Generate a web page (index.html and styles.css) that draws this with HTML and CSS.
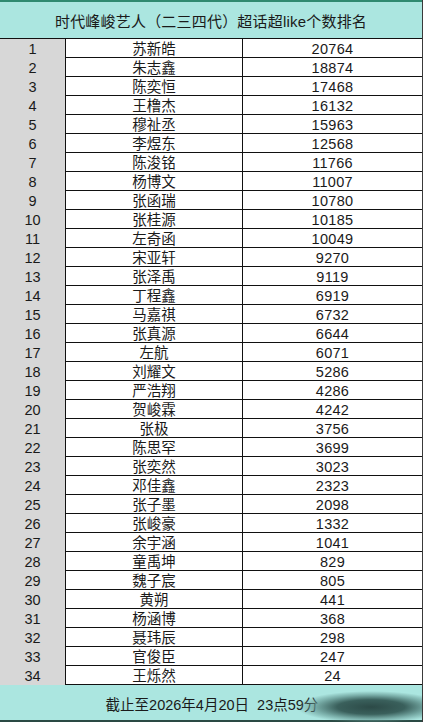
FILE: index.html
```html
<!DOCTYPE html>
<html lang="zh">
<head>
<meta charset="utf-8">
<link rel="stylesheet" href="styles.css">
</head>
<body>
<div class="sheet">
  <div class="title">时代峰峻艺人（二三四代）超话超like个数排名</div>
  <div class="grid" id="grid">
    <div class="row"><div class="c1">1</div><div class="c2">苏新皓</div><div class="c3">20764</div></div>
    <div class="row"><div class="c1">2</div><div class="c2">朱志鑫</div><div class="c3">18874</div></div>
    <div class="row"><div class="c1">3</div><div class="c2">陈奕恒</div><div class="c3">17468</div></div>
    <div class="row"><div class="c1">4</div><div class="c2">王橹杰</div><div class="c3">16132</div></div>
    <div class="row"><div class="c1">5</div><div class="c2">穆祉丞</div><div class="c3">15963</div></div>
    <div class="row"><div class="c1">6</div><div class="c2">李煜东</div><div class="c3">12568</div></div>
    <div class="row"><div class="c1">7</div><div class="c2">陈浚铭</div><div class="c3">11766</div></div>
    <div class="row"><div class="c1">8</div><div class="c2">杨博文</div><div class="c3">11007</div></div>
    <div class="row"><div class="c1">9</div><div class="c2">张函瑞</div><div class="c3">10780</div></div>
    <div class="row"><div class="c1">10</div><div class="c2">张桂源</div><div class="c3">10185</div></div>
    <div class="row"><div class="c1">11</div><div class="c2">左奇函</div><div class="c3">10049</div></div>
    <div class="row"><div class="c1">12</div><div class="c2">宋亚轩</div><div class="c3">9270</div></div>
    <div class="row"><div class="c1">13</div><div class="c2">张泽禹</div><div class="c3">9119</div></div>
    <div class="row"><div class="c1">14</div><div class="c2">丁程鑫</div><div class="c3">6919</div></div>
    <div class="row"><div class="c1">15</div><div class="c2">马嘉祺</div><div class="c3">6732</div></div>
    <div class="row"><div class="c1">16</div><div class="c2">张真源</div><div class="c3">6644</div></div>
    <div class="row"><div class="c1">17</div><div class="c2">左航</div><div class="c3">6071</div></div>
    <div class="row"><div class="c1">18</div><div class="c2">刘耀文</div><div class="c3">5286</div></div>
    <div class="row"><div class="c1">19</div><div class="c2">严浩翔</div><div class="c3">4286</div></div>
    <div class="row"><div class="c1">20</div><div class="c2">贺峻霖</div><div class="c3">4242</div></div>
    <div class="row"><div class="c1">21</div><div class="c2">张极</div><div class="c3">3756</div></div>
    <div class="row"><div class="c1">22</div><div class="c2">陈思罕</div><div class="c3">3699</div></div>
    <div class="row"><div class="c1">23</div><div class="c2">张奕然</div><div class="c3">3023</div></div>
    <div class="row"><div class="c1">24</div><div class="c2">邓佳鑫</div><div class="c3">2323</div></div>
    <div class="row"><div class="c1">25</div><div class="c2">张子墨</div><div class="c3">2098</div></div>
    <div class="row"><div class="c1">26</div><div class="c2">张峻豪</div><div class="c3">1332</div></div>
    <div class="row"><div class="c1">27</div><div class="c2">余宇涵</div><div class="c3">1041</div></div>
    <div class="row"><div class="c1">28</div><div class="c2">童禹坤</div><div class="c3">829</div></div>
    <div class="row"><div class="c1">29</div><div class="c2">魏子宸</div><div class="c3">805</div></div>
    <div class="row"><div class="c1">30</div><div class="c2">黄朔</div><div class="c3">441</div></div>
    <div class="row"><div class="c1">31</div><div class="c2">杨涵博</div><div class="c3">368</div></div>
    <div class="row"><div class="c1">32</div><div class="c2">聂玮辰</div><div class="c3">298</div></div>
    <div class="row"><div class="c1">33</div><div class="c2">官俊臣</div><div class="c3">247</div></div>
    <div class="row"><div class="c1">34</div><div class="c2">王烁然</div><div class="c3">24</div></div>
  </div>
  <div class="footer">截止至2026年4月20日&nbsp;&nbsp;23点59分<div class="smudge"></div></div>
</div>
</body>
</html>
```

FILE: styles.css
```css
html, body {
  margin: 0;
  padding: 0;
  background: #ffffff;
}
body {
  font-family: "Liberation Sans", "Noto Sans CJK SC", sans-serif;
  color: #1a1a1a;
}
.sheet {
  width: 422px;
  height: 722px;
  display: flex;
  flex-direction: column;
  border-right: 1px solid #3a3a3a;
  overflow: hidden;
}
.title {
  height: 36px;
  border-top: 2px solid #2f8a70;
  border-bottom: 1px solid #111111;
  background: #abe6e0;
  display: flex;
  align-items: center;
  justify-content: center;
  font-size: 15px;
  letter-spacing: 0.2px;
}
.grid {
  display: flex;
  flex-direction: column;
}
.row {
  display: grid;
  grid-template-columns: 66px 177px 1fr;
  height: 18px;
  border-bottom: 1px solid #111111;
  font-size: 14.5px;
  line-height: 18px;
}
.c1 {
  background: #d7d7d7;
  text-align: center;
  border-right: 1px solid #111111;
  padding-top: 1px;
}
.c2 {
  text-align: center;
  border-right: 1px solid #111111;
  padding-top: 1px;
}
.c3 {
  text-align: center;
  padding-top: 1px;
  letter-spacing: 0.3px;
}
.footer {
  position: relative;
  flex: 1;
  background: #abe6e0;
  border-bottom: 2px solid #2a4a44;
  display: flex;
  align-items: center;
  justify-content: center;
  font-size: 14.5px;
  padding-left: 2px;
  padding-top: 1px;
}
.smudge {
  position: absolute;
  left: 296px;
  top: 6px;
  width: 150px;
  height: 32px;
  background: radial-gradient(closest-side, #2c4a47 0%, #3a605c 45%, rgba(100,150,145,0.7) 75%, rgba(171,230,224,0) 100%);
}
```
